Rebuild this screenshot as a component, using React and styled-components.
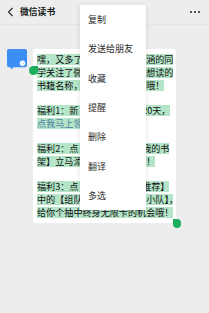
import React from "react";
import styled, { createGlobalStyle } from "styled-components";

const Global = createGlobalStyle`
  html, body { margin: 0; padding: 0; }
  body {
    width: 209px;
    height: 313px;
    overflow: hidden;
    background: #ededed;
    font-family: "Noto Sans CJK SC", "Noto Sans", sans-serif;
  }
`;

const Page = styled.div`
  position: relative;
  width: 209px;
  height: 313px;
  background: #ededed;
  display: flex;
  flex-direction: column;
`;

const Header = styled.div`
  height: 25px;
  flex: none;
  display: flex;
  align-items: center;
  padding: 0 9px 0 7px;
  gap: 6px;
  box-sizing: border-box;
  border-bottom: 1px solid #e6e6e6;
`;

const Title = styled.div`
  font-size: 8.8px;
  font-weight: 700;
  color: #1a1a1a;
  flex: 1;
  line-height: 1;
`;

const Dots = styled.div`
  display: flex;
  gap: 2px;
`;

const Dot = styled.span`
  width: 2px;
  height: 2px;
  border-radius: 50%;
  background: #222;
`;

const Chat = styled.div`
  display: flex;
  align-items: flex-start;
  gap: 6px;
  padding: 24px 0 0 7px;
`;

const Avatar = styled.svg`
  flex: none;
  width: 20px;
  height: 21px;
`;

const Bubble = styled.div`
  position: relative;
  width: 143px;
  box-sizing: border-box;
  background: #fff;
  border-radius: 2px;
  padding: 4.5px 2px 4.5px 4px;
  font-size: 9.1px;
  color: #111;
`;

const Line = styled.div`
  height: 12.7px;
  display: flex;
  align-items: center;
  white-space: nowrap;
`;

const Mark = styled.span`
  background: #b4e5c8;
  color: ${(p) => (p.$link ? "#4d7ea6" : "inherit")};
  line-height: 11px;
  height: 11px;
  display: inline-block;
`;

const Gap = styled.span`
  display: inline-block;
  background: #b4e5c8;
  height: 11px;
  width: ${(p) => p.$em}em;
`;

const Half = styled.span`
  font-feature-settings: "halt";
`;

const Handle = styled.span`
  position: absolute;
  width: 8.5px;
  height: 8.5px;
  background: #1cb05e;
  border-radius: ${(p) => (p.$start ? "50% 0 50% 50%" : "0 50% 50% 50%")};
  left: ${(p) => p.$x}px;
  top: ${(p) => p.$y}px;
`;

const Menu = styled.div`
  position: absolute;
  left: 80px;
  top: 5px;
  width: 66px;
  background: #fff;
  box-shadow: 0 1px 5px rgba(0, 0, 0, 0.12);
  border-radius: 1px;
`;

const MenuItem = styled.div`
  height: 29.3px;
  display: flex;
  align-items: center;
  padding-left: 8px;
  font-size: 9px;
  color: #2b2b2b;
`;

/* [visible left part, em hidden under the menu, visible right part] */
const lines = [
  ["嘿，又多了", 7, "涵的同"],
  ["学关注了微", 7, "想读的"],
  ["书籍名称，", 7, "哦！"],
  null,
  ["福利1：新", 7, "20天，"],
  ["点我马上领", 1, "", true],
  null,
  ["福利2：点", 7, "我的书"],
  ["架】立马添", 7, "！"],
  null,
  ["福利3：点", 7, "推荐】"],
  ["中的【组队", 7, "小队", false, "】，"],
  ["给你个抽中终身无限卡的机会哦！", 0, ""],
];

const menu = ["复制", "发送给朋友", "收藏", "提醒", "删除", "翻译", "多选"];

export default function App() {
  return (
    <Page>
      <Global />
      <Header>
        <svg width="7" height="10" viewBox="0 0 7 10">
          <path d="M5.5 1 L1.5 5 L5.5 9" fill="none" stroke="#222" strokeWidth="1.1" />
        </svg>
        <Title>微信读书</Title>
        <Dots>
          <Dot />
          <Dot />
          <Dot />
        </Dots>
      </Header>
      <Chat>
        <Avatar viewBox="0 0 20 21">
          <path
            d="M2 0 H18 A2 2 0 0 1 20 2 V16.3 A2 2 0 0 1 18 18.3 H6.5 L4.5 20.5 L3.5 18.3 H2 A2 2 0 0 1 0 16.3 V2 A2 2 0 0 1 2 0 Z"
            fill="#3b8ef3"
          />
          <circle cx="15.5" cy="14.3" r="2.7" fill="#fff" />
          <circle cx="14.6" cy="14" r="0.45" fill="#3b8ef3" />
          <circle cx="16.4" cy="14" r="0.45" fill="#3b8ef3" />
        </Avatar>
        <Bubble>
          {lines.map((ln, i) => (
            <Line key={i}>
              {ln && (
                <>
                  <Mark $link={ln[3]}>{ln[0]}</Mark>
                  {ln[1] > 0 && <Gap $em={ln[1]} />}
                  {(ln[2] || ln[4]) && (
                    <Mark>
                      {ln[2]}
                      {ln[4] && <Half>{ln[4]}</Half>}
                    </Mark>
                  )}
                </>
              )}
            </Line>
          ))}
          <Handle $start $x={-4} $y={17} />
          <Handle $x={139.5} $y={170} />
        </Bubble>
      </Chat>
      <Menu>
        {menu.map((m) => (
          <MenuItem key={m}>{m}</MenuItem>
        ))}
      </Menu>
    </Page>
  );
}
